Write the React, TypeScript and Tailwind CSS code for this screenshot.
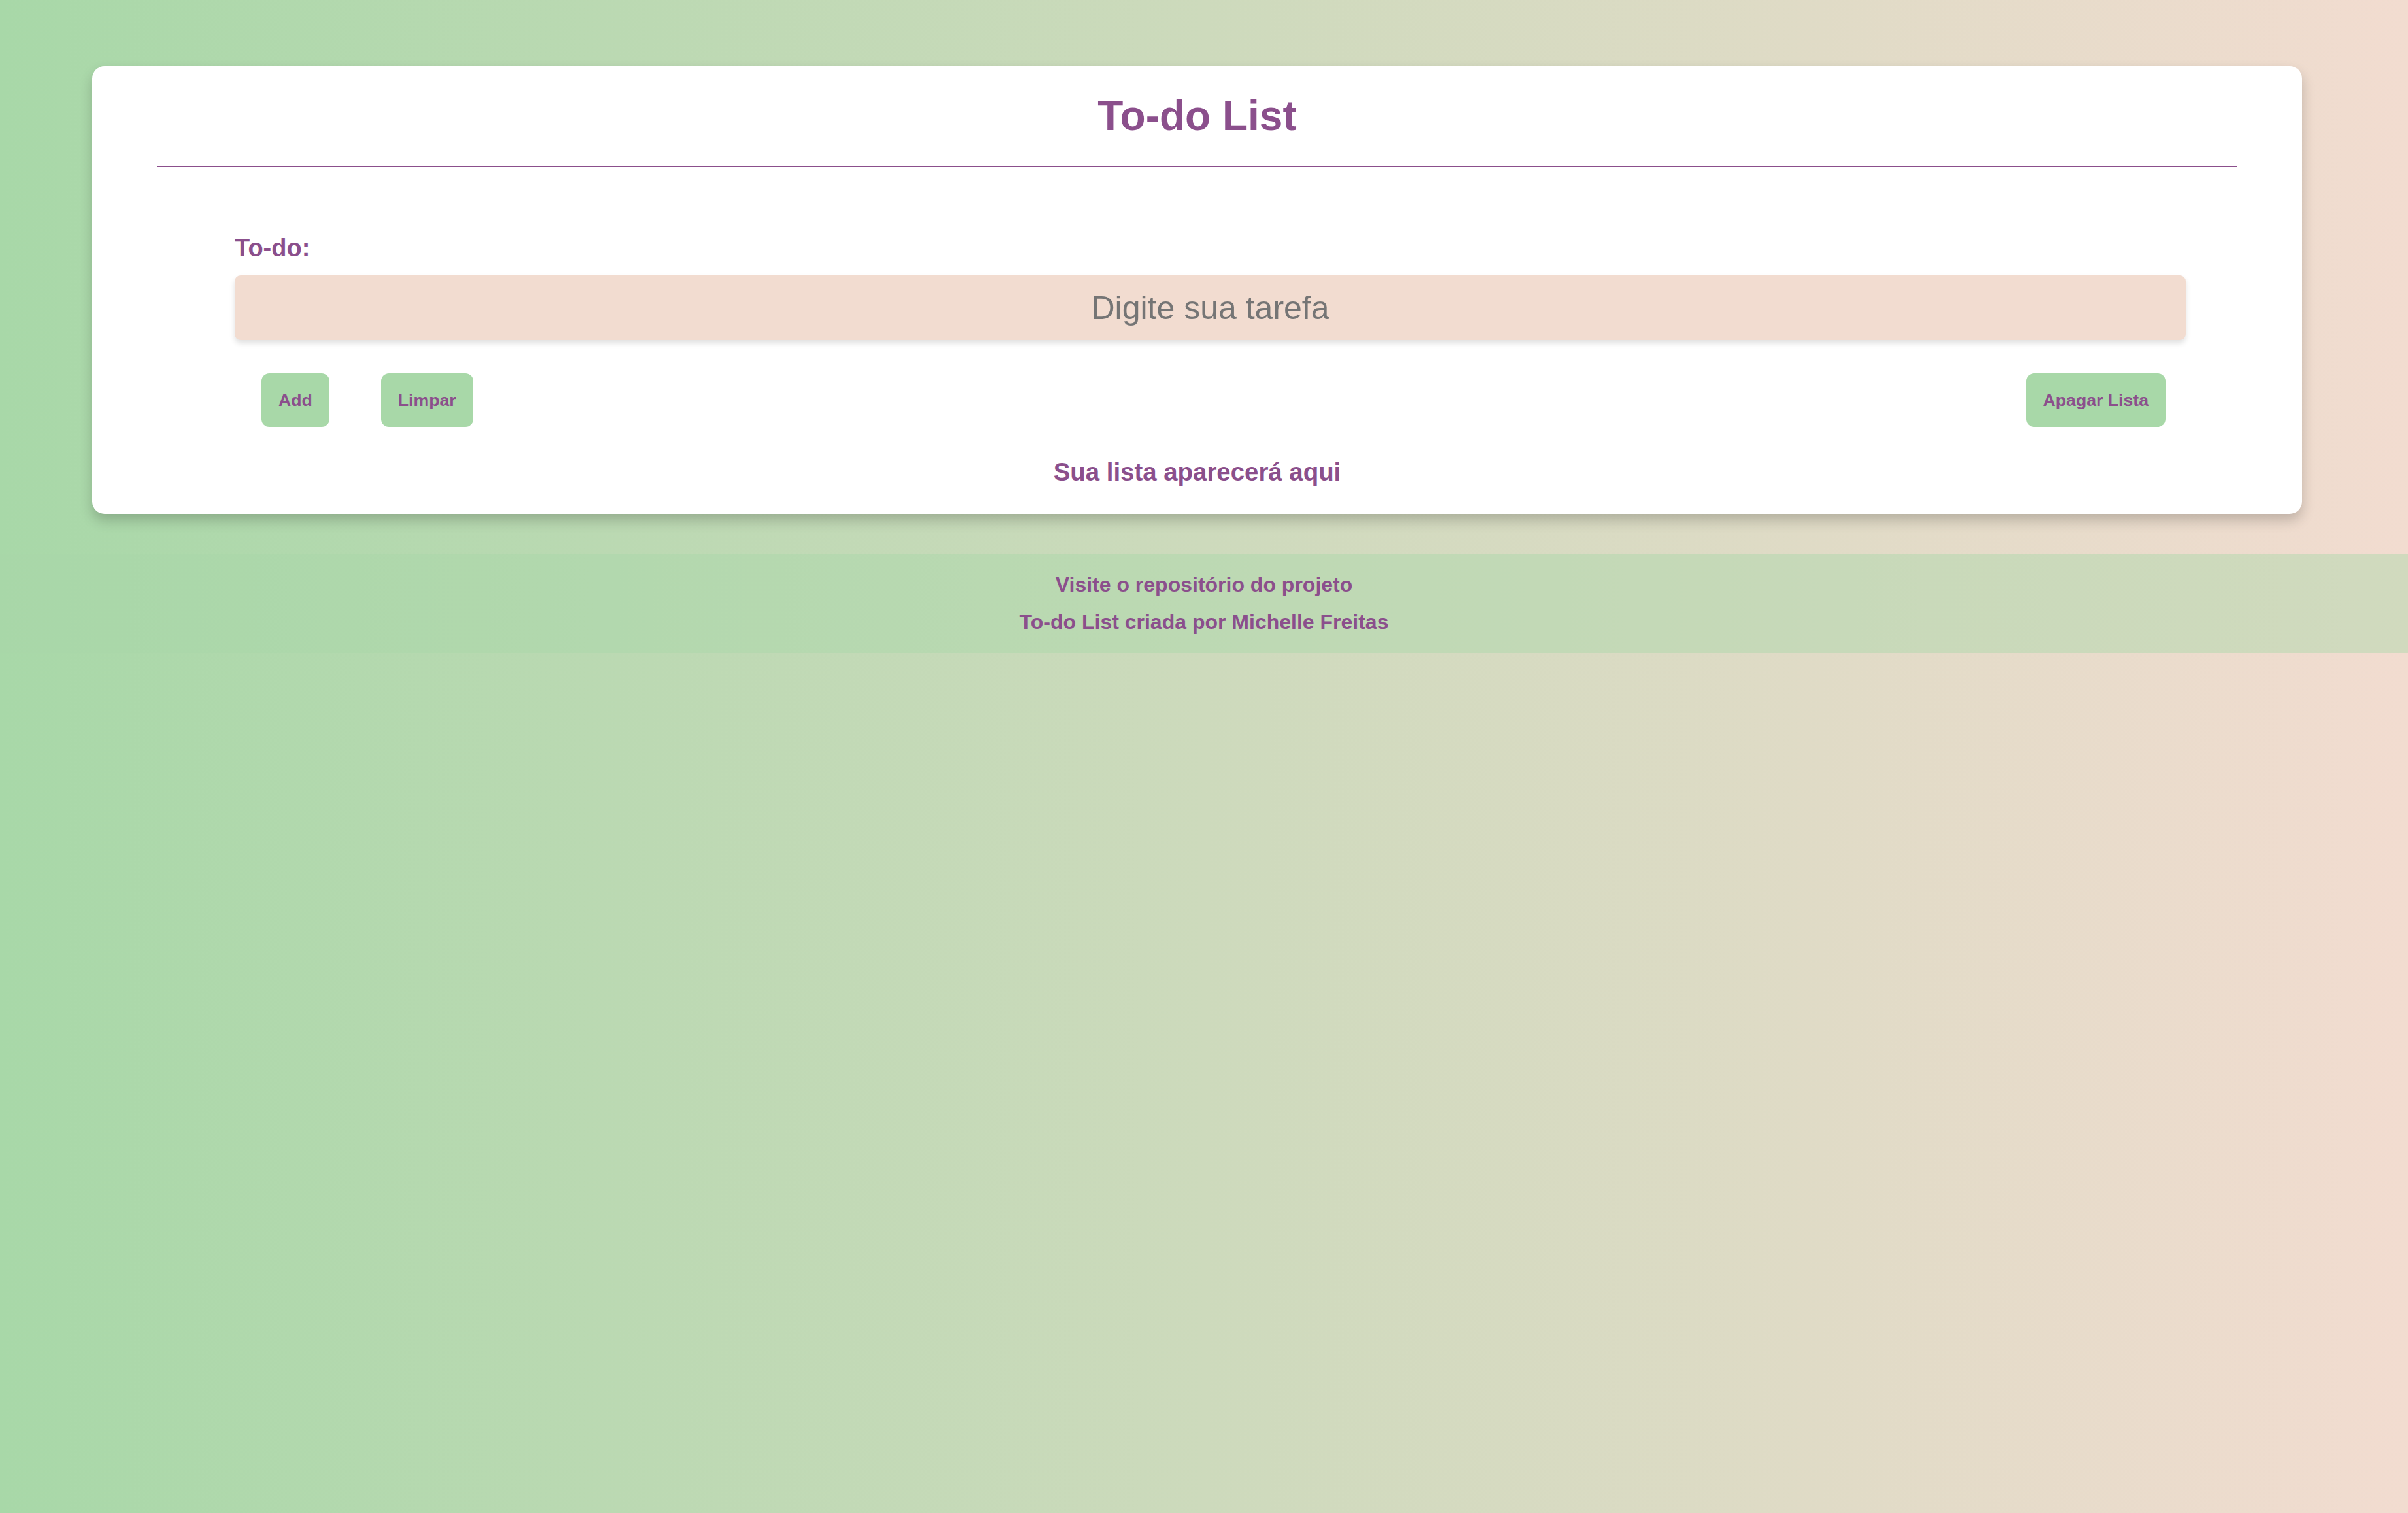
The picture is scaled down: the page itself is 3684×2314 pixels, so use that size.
export default function App() {
  return (
    <div className="min-h-[2314px] w-full bg-[linear-gradient(to_right,#a8d8a8,#f2dcd0)] font-['Liberation_Sans',Arial,sans-serif] text-[#8b4f8c]">
      <div className="pt-[101px]">
        {/* Card */}
        <main className="ml-[141px] w-[3381px] rounded-[19px] bg-white pt-[39px] pb-[42px] shadow-[0_10px_20px_rgba(0,0,0,0.2)]">
          <h1 className="text-center text-[64px] font-bold leading-[74px]">To-do List</h1>
          <div className="mx-[99px] mt-[40px] h-[2px] bg-[#8b4f8c]" />

          <div className="ml-[218px] mr-[178px] mt-[101px]">
            <label htmlFor="todo" className="block text-[38px] font-bold leading-[44px]">
              To-do:
            </label>
            <input
              id="todo"
              type="text"
              placeholder="Digite sua tarefa"
              className="mt-[20px] block h-[99px] w-full rounded-[9px] bg-[#f2dcd0] text-center text-[50px] text-[#757575] shadow-[0_5px_8px_rgba(0,0,0,0.12)] outline-none placeholder:text-[#757575]"
            />

            <div className="mt-[51px] flex items-center">
              <button className="ml-[41px] h-[82px] rounded-[12px] bg-[#a8d8a8] px-[26px] text-[26.67px] font-bold">
                Add
              </button>
              <button className="ml-[79px] h-[82px] rounded-[12px] bg-[#a8d8a8] px-[26px] text-[26.67px] font-bold">
                Limpar
              </button>
              <button className="ml-auto mr-[31px] h-[82px] rounded-[12px] bg-[#a8d8a8] px-[26px] text-[26.67px] font-bold">
                Apagar Lista
              </button>
            </div>
          </div>

          <p className="mt-[47px] text-center text-[38.4px] font-bold leading-[44px]">
            Sua lista aparecerá aqui
          </p>
        </main>

        {/* Footer */}
        <footer className="mt-[61px] bg-[rgba(168,216,168,0.45)] py-[19px] text-center text-[32px] font-bold leading-[57px]">
          <p>
            <a href="#">Visite o repositório do projeto</a>
          </p>
          <p>To-do List criada por Michelle Freitas</p>
        </footer>
      </div>
    </div>
  );
}
